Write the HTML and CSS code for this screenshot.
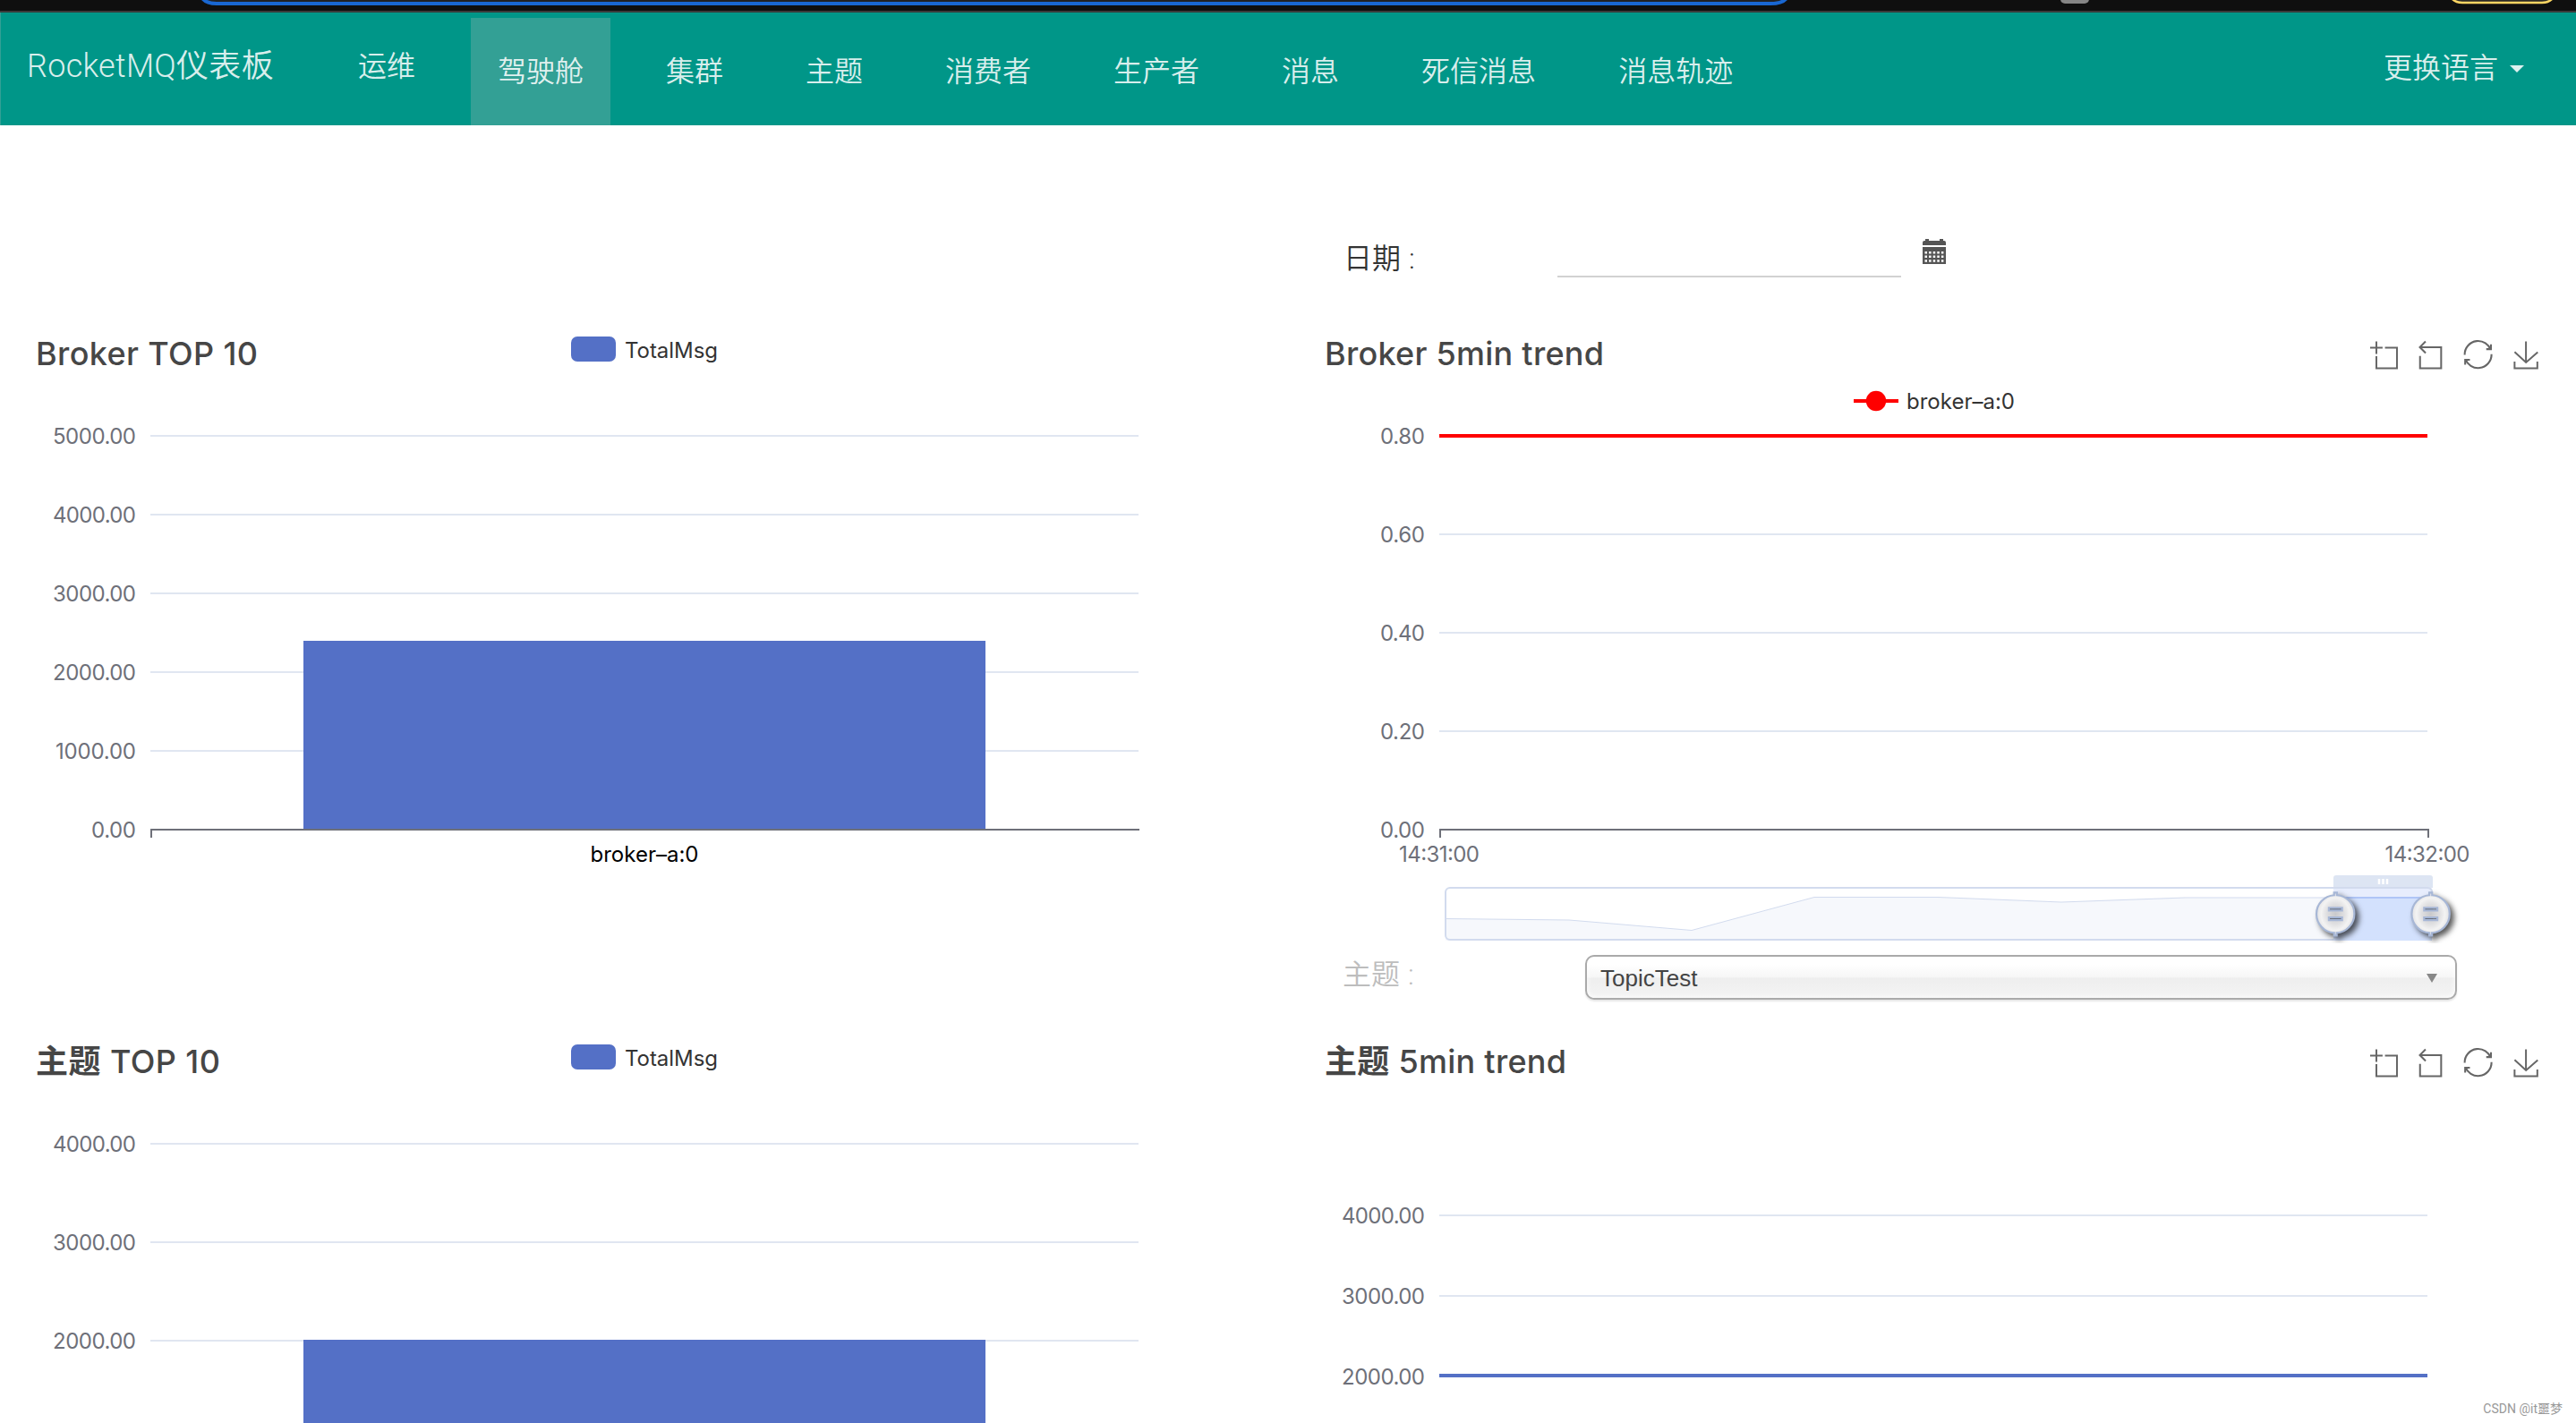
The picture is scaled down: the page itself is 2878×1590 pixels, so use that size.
FILE: index.html
```html
<!DOCTYPE html>
<html lang="zh-CN">
<head>
  <meta charset="UTF-8" />
  <meta name="viewport" content="width=device-width, initial-scale=1.0" />
  <title>RocketMQ仪表板</title>
  <link rel="stylesheet" href="styles.css">
</head>
<body>
<!-- shared icons -->
<svg class="sprite">
  <symbol id="toolbox" viewBox="0 0 190 34" overflow="visible">
    <g class="tool">
      <path transform="translate(1.5 1.5) scale(.517)" d="M0,13.5h26.9 M13.5,26.9V0 M32.1,13.5H58V58H13.5 V32.1"/>
      <path transform="translate(51.8 .8) scale(.529)" d="M22,1.4L9.9,13.5l12.3,12.3 M10.3,13.5H54.9v44.6 H10.3v-26"/>
      <path transform="translate(106 0) scale(.537)" d="M47,18.9h9.8V8.7 M56.3,20.1 C52.1,9,40.5,0.6,26.8,2.1C12.6,3.7,1.6,16.2,2.1,30.6 M13,41.1H3.1v10.2 M3.7,39.9c4.2,11.1,15.8,19.5,29.5,18 c14.2-1.6,25.2-14.1,24.7-28.5"/>
      <path transform="translate(160.5 1.5) scale(.517)" d="M4.7,22.9L29.3,45.5L54.7,23.4M4.6,43.6L4.6,58L53.8,58L53.8,43.6M29.2,45.1L29.2,0"/>
    </g>
  </symbol>
  <symbol id="handle" viewBox="-25 -25 50 50" overflow="visible">
    <path transform="scale(2.24) translate(-10 -21.3)" d="M10.7,11.9v-1.3H9.3v1.3c-4.9,0.3-8.8,4.4-8.8,9.4c0,5,3.9,9.1,8.8,9.4v1.3h1.3v-1.3c4.9-0.3,8.8-4.4,8.8-9.4C19.5,16.3,15.6,12.2,10.7,11.9z M13.3,24.4H6.7V23h6.6V24.4z M13.3,19.6H6.7v-1.4h6.6V19.6z"/>
  </symbol>
  <radialGradient id="knob">
    <stop offset="0" stop-color="#c9c9cb"/>
    <stop offset=".45" stop-color="#dedee0"/>
    <stop offset=".75" stop-color="#f3f3f3"/>
    <stop offset="1" stop-color="#e2e2e4"/>
  </radialGradient>
</svg>

<svg class="browser-edge" width="2878" height="14">
  <rect width="2878" height="14" fill="#0f0f0f"/>
  <path d="M226,-2C229,2 234,4 242,4H1978C1988,4 1993,2 1996,-2" fill="#202124" stroke="#1967d2" stroke-width="4"/>
  <rect x="2302" y="-10" width="32" height="14" rx="5" fill="#858585"/>
  <path d="M2739,-2Q2743,3 2751,3H2840Q2848,3 2852,-2" fill="#2b2a26" stroke="#fdd663" stroke-width="2.5"/>
  <rect y="12" width="2878" height="2" fill="#3a3a3a"/>
</svg>

<nav class="navbar">
  <a class="brand">RocketMQ仪表板</a>
  <ul class="menu">
    <li class="raised">运维</li>
    <li class="active">驾驶舱</li>
    <li>集群</li>
    <li>主题</li>
    <li>消费者</li>
    <li>生产者</li>
    <li>消息</li>
    <li>死信消息</li>
    <li>消息轨迹</li>
  </ul>
  <div class="lang">更换语言<span class="caret"></span></div>
</nav>

<main class="dashboard">
  <section class="column">
    <div class="filter"></div>
    <svg class="chart" viewBox="0 0 1439 700">
      <text class="title" x="40" y="54" textLength="248">Broker TOP 10</text>
      <rect class="bar" x="638" y="22" width="50" height="28" rx="7"/>
      <text class="legend" x="698" y="45.500" textLength="104">TotalMsg</text>
      <path class="grid" d="M168,133H1272M168,221H1272M168,309H1272M168,397H1272M168,485H1272"/>
      <g class="axis-label">
        <text x="152" y="141.500" textLength="93">5000.00</text>
        <text x="152" y="229.500" textLength="93">4000.00</text>
        <text x="152" y="317.500" textLength="93">3000.00</text>
        <text x="152" y="405.500" textLength="93">2000.00</text>
        <text x="152" y="493.500" textLength="90">1000.00</text>
        <text x="152" y="581.500" textLength="50">0.00</text>
      </g>
      <rect class="bar" x="339" y="362" width="762" height="211"/>
      <path class="axis" d="M169,582V573H1273"/>
      <text class="category" x="720" y="609" textLength="121">broker–a:0</text>
    </svg>
    <div class="topic"></div>
    <svg class="chart cut" viewBox="0 0 1439 445">
      <text class="title" x="40" y="54" textLength="206"><tspan class="cjk">主题</tspan> TOP 10</text>
      <rect class="bar" x="638" y="22" width="50" height="28" rx="7"/>
      <text class="legend" x="698" y="45.500" textLength="104">TotalMsg</text>
      <path class="grid" d="M168,133H1272M168,243H1272M168,353H1272"/>
      <g class="axis-label">
        <text x="152" y="141.500" textLength="93">4000.00</text>
        <text x="152" y="251.500" textLength="93">3000.00</text>
        <text x="152" y="361.500" textLength="93">2000.00</text>
      </g>
      <rect class="bar" x="339" y="352" width="762" height="93"/>
    </svg>
  </section>

  <section class="column">
    <div class="filter">
      <label>日期<span class="colon">:</span></label>
      <div class="date-input"></div>
      <svg class="calendar" width="26" height="28" viewBox="0 0 26 28">
        <path d="M0,7V4Q0,2 2,2H3V0H7V2H19V0H23V2H24Q26,2 26,4V7Z"/>
        <path fill-rule="evenodd" d="M0,9H26V28H0Z M2.500,14v2.500h2.500v-2.500z m4.600,0v2.500h2.500v-2.500z m4.600,0v2.500h2.500v-2.500z m4.600,0v2.500h2.500v-2.500z m4.600,0v2.500h2.500v-2.500z M2.500,18.600v2.500h2.500v-2.500z m4.600,0v2.500h2.500v-2.500z m4.600,0v2.500h2.500v-2.500z m4.600,0v2.500h2.500v-2.500z m4.600,0v2.500h2.500v-2.500z M2.500,23.200v2.500h2.500v-2.500z m4.600,0v2.500h2.500v-2.500z m4.600,0v2.500h2.500v-2.500z m4.600,0v2.500h2.500v-2.500z m4.600,0v2.500h2.500v-2.500z"/>
      </svg>
    </div>
    <svg class="chart" viewBox="0 0 1439 700">
      <text class="title" x="41" y="54" textLength="312">Broker 5min trend</text>
      <use href="#toolbox" x="1207.500" y="26" width="190" height="34"/>
      <path class="line broker" d="M632,94H682"/>
      <circle class="dot" cx="657" cy="94" r="11.200"/>
      <text class="legend" x="691" y="103" textLength="121">broker–a:0</text>
      <path class="grid" d="M169,133H1273M169,243H1273M169,353H1273M169,463H1273"/>
      <g class="axis-label">
        <text x="153" y="141.500" textLength="50">0.80</text>
        <text x="153" y="251.500" textLength="50">0.60</text>
        <text x="153" y="361.500" textLength="50">0.40</text>
        <text x="153" y="471.500" textLength="50">0.20</text>
        <text x="153" y="581.500" textLength="50">0.00</text>
      </g>
      <path class="axis" d="M170,582V573H1274V582"/>
      <text class="time" x="169" y="609" textLength="90">14:31:00</text>
      <text class="time" x="1273" y="609" textLength="95">14:32:00</text>
      <path class="line broker" d="M169,133H1273"/>

      <!-- data zoom slider -->
      <path class="zoom-area" d="M176,672.500L314,674L451,685.500L588,648.500H726L864,654L1002,649H1278V697H176Z"/>
      <path class="zoom-line" d="M176,672.500L314,674L451,685.500L588,648.500H726L864,654L1002,649H1278"/>
      <rect class="zoom-frame" x="176" y="638" width="1102" height="58" rx="5"/>
      <rect class="zoom-window" x="1168" y="639" width="110" height="57"/>
      <rect class="zoom-selected" x="1168" y="649" width="110" height="48"/>
      <path class="zoom-selected-line" d="M1168,649H1278"/>
      <path class="zoom-grip" d="M1168,638V627Q1168,624 1171,624H1276Q1279,624 1279,627V638Z"/>
      <path class="zoom-frame" d="M1168,638H1273Q1278,638 1278,643"/>
      <path class="grip-marks" d="M1219,628v6m4.500,-6v6m4.500,-6v6"/>
      <use class="zoom-handle" href="#handle" x="1145.300" y="642.300" width="50" height="50"/>
      <use class="zoom-handle" href="#handle" x="1251.700" y="642.300" width="50" height="50"/>
    </svg>
    <div class="topic">
      <label>主题<span class="colon">:</span></label>
      <div class="select"><span>TopicTest</span><i class="arrow"></i></div>
    </div>
    <svg class="chart cut" viewBox="0 0 1439 445">
      <text class="title" x="41" y="54" textLength="270"><tspan class="cjk">主题</tspan> 5min trend</text>
      <use href="#toolbox" x="1207.500" y="26" width="190" height="34"/>
      <path class="grid" d="M169,213H1273M169,303H1273"/>
      <g class="axis-label">
        <text x="153" y="221.500" textLength="93">4000.00</text>
        <text x="153" y="311.500" textLength="93">3000.00</text>
        <text x="153" y="401.500" textLength="93">2000.00</text>
      </g>
      <path class="line topic-line" d="M169,392H1273"/>
    </svg>
  </section>
</main>

<div class="watermark">CSDN @it噩梦</div>
</body>
</html>
```

FILE: styles.css
```css
* {
  box-sizing: border-box;
}
body {
  margin: 0;
  height: 1590px;
  position: relative;
  background: #fff;
  color: #333;
  font-family: Roboto, 'Noto Sans CJK SC', sans-serif;
  font-weight: 350;
  font-size: 32px;
}
.sprite {
  position: absolute;
  width: 0;
  height: 0;
}
.browser-edge {
  display: block;
}

/* navbar */
.navbar {
  display: flex;
  height: 126px;
  padding-left: 29px;
  background: #009688;
  border-left: 1px solid #33a095;
  color: rgba(255,255,255,0.87);
}
.brand {
  width: 340px;
  font-size: 36px;
  letter-spacing: 0.3px;
  line-height: 120px;
  white-space: nowrap;
}
.menu {
  display: flex;
  gap: 32px;
  margin: 6px 0 0;
  padding: 0;
  list-style: none;
}
.menu li {
  height: 120px;
  padding: 0 30px;
  line-height: 120px;
}
.menu .raised {
  line-height: 108px;
}
.menu .active {
  background: #33a095;
}
.lang {
  display: flex;
  align-items: center;
  height: 117px;
  margin-left: auto;
  padding-right: 58px;
}
.caret {
  margin: 8px 0 0 13px;
  border: 8px solid transparent;
  border-top-color: currentColor;
  border-bottom: 0;
}

/* dashboard */
.dashboard {
  display: grid;
  grid-template-columns: 1439px 1439px;
}
.filter {
  display: flex;
  height: 214px;
  padding: 124px 0 0 62px;
}
.filter label,
.topic label {
  width: 239px;
  height: 48px;
  line-height: 50px;
}
.colon {
  margin-left: 9px;
}
.date-input {
  width: 384px;
  height: 46px;
  border-bottom: 2px solid #d2d2d2;
}
.calendar {
  margin: 3px 0 0 24px;
  fill: #555;
}
.topic {
  display: flex;
  height: 91px;
  padding: 13px 0 0 61px;
}
.topic label {
  width: 271px;
  line-height: 45px;
  color: #bdbdbd;
}
.select {
  display: flex;
  align-items: center;
  justify-content: space-between;
  width: 974px;
  height: 50px;
  padding: 2px 20px 0 15px;
  border: 2px solid #aaa;
  border-radius: 10px;
  background: linear-gradient(#fff 20%, #f6f6f6 50%, #eee 52%, #f4f4f4 100%);
  box-shadow: 0 0 6px #fff inset, 0 2px 2px rgba(0,0,0,0.1);
  color: #444;
  font-family: 'Liberation Sans', sans-serif;
  font-weight: 400;
  font-size: 26px;
}
.arrow {
  border: 6px solid transparent;
  border-top: 10px solid #888;
  border-bottom: 0;
}

/* charts */
.chart {
  display: block;
  width: 1439px;
  height: 700px;
  font-family: Inter, 'Noto Sans CJK SC', sans-serif;
  font-weight: 400;
  font-size: 24px;
}
.chart.cut {
  height: 445px;
}
.title {
  fill: #464646;
  font-size: 36px;
  font-weight: 500;
}
.title .cjk {
  font-weight: 700;
}
.legend {
  fill: #333;
}
.bar {
  fill: #5470c6;
}
.grid {
  stroke: #e0e6f1;
  stroke-width: 2;
}
.axis {
  fill: none;
  stroke: #6e7079;
  stroke-width: 2;
}
.axis-label {
  fill: #6e7079;
  text-anchor: end;
}
.category,
.time {
  text-anchor: middle;
}
.time {
  fill: #6e7079;
}
.line {
  stroke-width: 4;
}
.broker {
  stroke: #f00;
}
.dot {
  fill: #f00;
}
.topic-line {
  stroke: #5470c6;
}
.tool {
  fill: none;
  stroke: #666;
  stroke-width: 3.85;
}
.zoom-area {
  fill: #f6f8fc;
}
.zoom-line {
  fill: none;
  stroke: #d2dbee;
}
.zoom-frame {
  fill: none;
  stroke: #d2dbee;
  stroke-width: 2;
}
.zoom-window {
  fill: #e7edfd;
}
.zoom-selected {
  fill: #d3e1fd;
}
.zoom-selected-line {
  stroke: #afc5f7;
  stroke-width: 2;
}
.zoom-grip {
  fill: #dde5f3;
}
.grip-marks {
  stroke: #fff;
  stroke-width: 2.5;
}
.zoom-handle {
  fill: url(#knob);
  stroke: #a7b7d6;
  filter: drop-shadow(4px 4px 3px rgba(0,0,0,0.65));
}
.watermark {
  position: absolute;
  right: 15px;
  bottom: 6px;
  color: #999;
  font-size: 14px;
  font-weight: 400;
  line-height: 20px;
}
```
